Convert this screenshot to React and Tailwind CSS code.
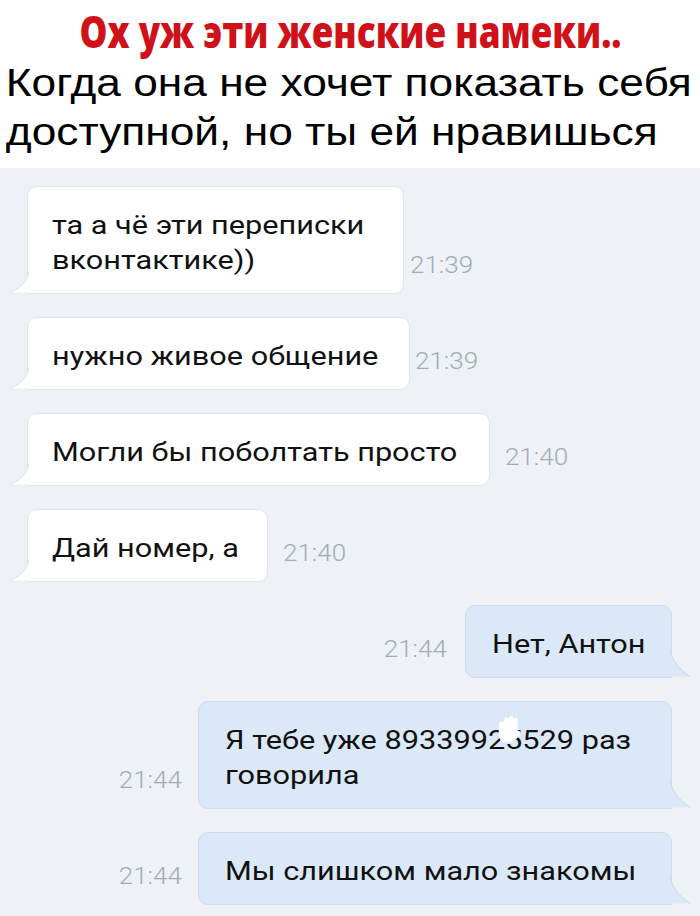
import React from "react";

const LeftTail = () => (
  <svg className="absolute bottom-0 left-[-19px]" width="20" height="21" viewBox="0 0 20 21">
    <path d="M19.5 0 C19 9 12 16 1 20.5 L20 20.5 L20 0 Z" fill="#ffffff" />
    <path d="M19.5 0 C19 9 12 16 1 20.5" fill="none" stroke="#dfe4ea" strokeWidth="1" />
  </svg>
);

const RightTail = () => (
  <svg className="absolute bottom-0 right-[-20px]" width="21" height="28" viewBox="0 0 21 28">
    <path d="M0.5 0 C1 10 8 19 20 27.5 L0 27.5 L0 0 Z" fill="#dae8f8" />
    <path d="M0.5 0 C1 10 8 19 20 27.5" fill="none" stroke="#c9d8ea" strokeWidth="1" />
  </svg>
);

const roboto = { fontFamily: "Roboto, 'Noto Sans', sans-serif" };

const Time = ({ t, className = "" }) => (
  <span
    className={"inline-block text-[23px] leading-[23px] font-light text-[#a4abb3] mb-[17px] shrink-0 scale-x-[1.13] " + className}
    style={roboto}
  >
    {t}
  </span>
);

const In = ({ w, children, t, tm }) => (
  <div className="flex items-end pl-[27px]">
    <div
      className="relative bg-white rounded-[10px] rounded-bl-none border border-[#e2e6eb] pl-[24px] pt-[21px] pb-[15px] text-[26px] leading-[35px] text-[#111]"
      style={{ width: w, ...roboto }}
    >
      <div className="origin-left scale-x-[1.18] whitespace-nowrap">{children}</div>
      <LeftTail />
    </div>
    <Time t={t} className={"origin-left " + tm} />
  </div>
);

const Out = ({ w, children, t, tm }) => (
  <div className="flex items-end justify-end pr-[28px]">
    <Time t={t} className={"origin-right " + tm} />
    <div
      className="relative bg-[#dae8f8] rounded-[10px] rounded-br-none border border-[#cddbec] pl-[26px] pt-[21px] pb-[15px] text-[26px] leading-[35px] text-[#111]"
      style={{ width: w, ...roboto }}
    >
      <div className="origin-left scale-x-[1.18] whitespace-nowrap">{children}</div>
      <RightTail />
    </div>
  </div>
);

export default function App() {
  return (
    <div className="w-[700px] h-[916px] overflow-hidden bg-white flex flex-col">
      <div className="pt-[5px] pb-[11px]">
        <div className="flex justify-center">
          <div
            className="inline-block whitespace-nowrap text-[45px] leading-[52px] font-extrabold text-[#cf1219] scale-x-[0.78] origin-center"
            style={{ fontFamily: "'Open Sans', Roboto, sans-serif" }}
          >
            Ох уж эти женские намеки..
          </div>
        </div>
        <div
          className="mt-[2px] pl-[5px] text-[38px] leading-[49px] text-black origin-left scale-x-[1.165] whitespace-nowrap"
          style={{ fontFamily: "'Liberation Sans', Arial, sans-serif" }}
        >
          Когда она не хочет показать себя
          <br />
          доступной, но ты ей нравишься
        </div>
      </div>
      <div className="flex-1 bg-[#eef1f5] pt-[18px] flex flex-col gap-[23px]">
        <In w="377px" t="21:39" tm="ml-[6px]">
          та а чё эти переписки
          <br />
          вконтактике))
        </In>
        <In w="383px" t="21:39" tm="ml-[5px]">нужно живое общение</In>
        <In w="463px" t="21:40" tm="ml-[15px]">Могли бы поболтать просто</In>
        <In w="241px" t="21:40" tm="ml-[15px]">Дай номер, а</In>
        <Out w="207px" t="21:44" tm="mr-[18px]">Нет, Антон</Out>
        <Out w="474px" t="21:44" tm="mr-[16px]">
          <span className="relative">
            Я тебе уже 89339925529 раз
            <svg className="absolute left-[229px] top-[-9px]" width="22" height="28" viewBox="0 0 22 28">
              <path d="M3 9 C3 5 6 4 7 7 L8 2 C9 0 11 1 11 3 L12 1 C13 -1 16 0 15 3 L16 2 C18 1 20 3 19 6 L19 15 C21 14 22 17 20 20 C17 25 13 27 8 26 C4 25 2 21 3 15 Z" fill="#ffffff" />
            </svg>
          </span>
          <br />
          говорила
        </Out>
        <Out w="474px" t="21:44" tm="mr-[16px]">Мы слишком мало знакомы</Out>
      </div>
    </div>
  );
}
